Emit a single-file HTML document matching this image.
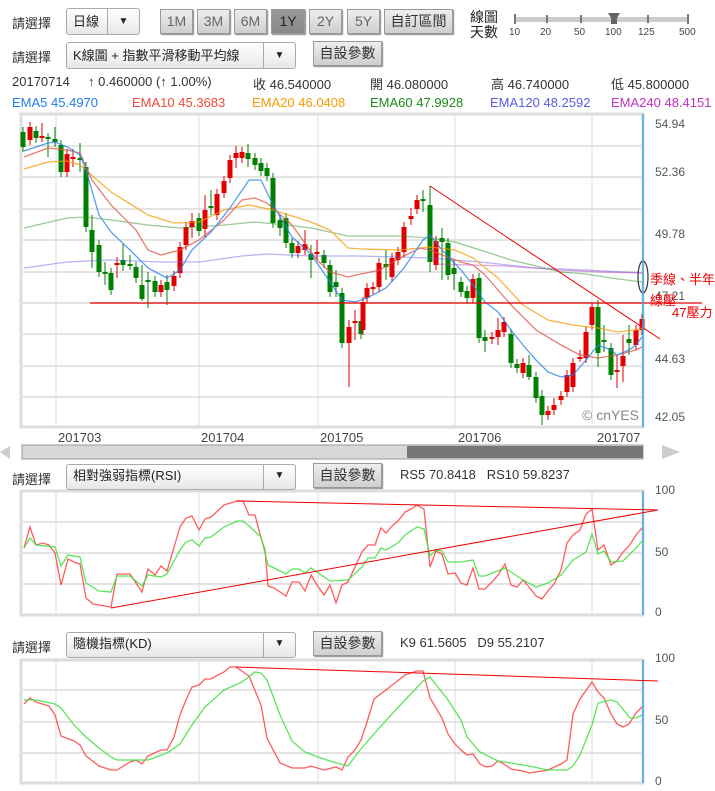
<!DOCTYPE html>
<html><head><meta charset="utf-8">
<style>
body{margin:0;width:715px;height:791px;background:#fff;position:relative;overflow:hidden;font-family:"Liberation Sans","Noto Sans CJK TC",sans-serif;font-size:13px;color:#333}
.a{position:absolute;white-space:nowrap}
.sel{position:absolute;height:24px;border:1px solid #aaa;border-radius:3px;background:linear-gradient(#fff,#e8e8e8);box-sizing:border-box;font-size:13px;line-height:22px;padding-left:6px;color:#222}
.sel .ar{position:absolute;right:0;top:0;width:31px;height:22px;border-left:1px solid #aaa;text-align:center;font-size:10px;line-height:22px}
.btn{position:absolute;height:25px;border:1px solid #999;box-sizing:border-box;background:linear-gradient(#eee,#cfcfcf);font-size:14px;line-height:23px;text-align:center;color:#666;box-shadow:1px 1px 1px #888}
.btn.dk{background:linear-gradient(#999,#888);color:#222}
.btn.cn{color:#333}
</style></head><body>
<div class="a" style="left:12px;top:13px">請選擇</div>
<div class="sel" style="left:66px;top:8px;width:74px;height:27px;line-height:25px">日線<div class="ar" style="height:25px;line-height:25px">▼</div></div>
<div class="btn" style="left:160px;top:9px;width:33px">1M</div>
<div class="btn" style="left:197px;top:9px;width:33px">3M</div>
<div class="btn" style="left:234px;top:9px;width:33px">6M</div>
<div class="btn dk" style="left:271px;top:9px;width:34px">1Y</div>
<div class="btn" style="left:309px;top:9px;width:33px">2Y</div>
<div class="btn" style="left:347px;top:9px;width:33px">5Y</div>
<div class="btn cn" style="left:384px;top:9px;width:69px">自訂區間</div>
<div class="a" style="left:470px;top:10px;line-height:15px;font-size:14px;color:#222">線圖<br>天數</div>
<div class="a" style="left:514px;top:17px;width:175px;height:5px;background:#ccc"></div>
<div class="a" style="left:514px;top:14px;width:2px;height:10px;background:#777"></div>
<div class="a" style="left:546px;top:15px;width:2px;height:8px;background:#777"></div>
<div class="a" style="left:580px;top:15px;width:2px;height:8px;background:#777"></div>
<div class="a" style="left:647px;top:15px;width:2px;height:8px;background:#777"></div>
<div class="a" style="left:687px;top:14px;width:2px;height:10px;background:#777"></div>
<svg class="a" style="left:607px;top:12px" width="14" height="13"><path d="M1 1H13L10 6V12H4V6Z" fill="#666"/></svg>
<div class="a" style="left:509px;top:27px;font-size:10px;color:#444">10</div>
<div class="a" style="left:540px;top:27px;font-size:10px;color:#444">20</div>
<div class="a" style="left:574px;top:27px;font-size:10px;color:#444">50</div>
<div class="a" style="left:605px;top:27px;font-size:10px;color:#444">100</div>
<div class="a" style="left:638px;top:27px;font-size:10px;color:#444">125</div>
<div class="a" style="left:679px;top:27px;font-size:10px;color:#444">500</div>

<div class="a" style="left:12px;top:47px">請選擇</div>
<div class="sel" style="left:66px;top:42px;width:230px;height:27px;line-height:25px">K線圖 + 指數平滑移動平均線<div class="ar" style="height:25px;line-height:25px">▼</div></div>
<div class="btn cn" style="left:313px;top:41px;width:69px">自設參數</div>

<div class="a" style="left:12px;top:74px">20170714</div>
<div class="a" style="left:88px;top:74px">↑ 0.460000 (↑ 1.00%)</div>
<div class="a" style="left:253px;top:74px">收 46.540000</div>
<div class="a" style="left:370px;top:74px">開 46.080000</div>
<div class="a" style="left:491px;top:74px">高 46.740000</div>
<div class="a" style="left:611px;top:74px">低 45.800000</div>
<div class="a" style="left:12px;top:95px;color:#1e7cf0">EMA5 45.4970</div>
<div class="a" style="left:132px;top:95px;color:#ef4a3a">EMA10 45.3683</div>
<div class="a" style="left:252px;top:95px;color:#f89a00">EMA20 46.0408</div>
<div class="a" style="left:370px;top:95px;color:#1a8a1a">EMA60 47.9928</div>
<div class="a" style="left:490px;top:95px;color:#5a5ae6">EMA120 48.2592</div>
<div class="a" style="left:611px;top:95px;color:#c030c0">EMA240 48.4151</div>

<svg class="a" style="left:0;top:0" width="715" height="791" id="s">
<g fill="none" stroke="#e4e4e4" stroke-width="2">
<rect x="21" y="114" width="622" height="313" stroke="#ddd" stroke-width="3"/>
<path d="M21 146H643M21 177H643M21 209H643M21 240H643M21 272H643M21 303H643M21 334H643M21 366H643M21 397H643"/>
<path d="M56 114V427M199 114V427M318 114V427M455 114V427M592 114V427" stroke-width="1" stroke="#ddd"/>
<rect x="21" y="491" width="622" height="124" stroke="#ddd" stroke-width="3"/>
<path d="M21 522H643M21 553H643M21 584H643"/>
<path d="M56 491V615M199 491V615M318 491V615M455 491V615M592 491V615" stroke-width="1" stroke="#ddd"/>
<rect x="21" y="660" width="622" height="123" stroke="#ddd" stroke-width="3"/>
<path d="M21 690H643M21 722H643M21 753H643"/>
<path d="M56 660V783M199 660V783M318 660V783M455 660V783M592 660V783" stroke-width="1" stroke="#ddd"/>
</g>
<g id="cd"></g>
<g fill="none" stroke-width="1.3" opacity="0.75">
<polyline stroke="#5a5ae6" opacity=".6" points="24,268 67,262 111,260 161,262 199,262 242,256 267,254 311,256 361,256 430,258 480,262 536,268 586,270 642,273"/>
<polyline stroke="#c030c0" opacity=".6" points="436,264 505,266 560,270 600,272 642,273"/>
<polyline stroke="#1a8a1a" opacity=".6" points="24,228 67,218 86,217 111,220 148,225 180,228 224,225 255,222 286,225 311,228 348,236 361,236 400,236 430,238 455,242 480,250 511,260 536,266 561,272 586,274 611,278 642,282"/>
<polyline stroke="#f89a00" points="24,169 48,162 67,161 80,165 111,192 148,215 174,223 199,222 224,210 249,205 273,210 311,222 330,230 348,248 361,249 400,250 430,247 455,250 473,258 498,278 523,305 548,320 573,325 598,328 617,332 636,330 642,328"/>
<polyline stroke="#e05040" points="24,157 48,148 67,150 80,153 92,180 111,205 136,230 148,250 161,255 180,250 199,240 224,220 242,200 255,198 267,203 292,225 317,260 330,272 348,277 361,274 380,270 400,258 420,248 430,250 442,255 461,262 473,265 485,275 511,305 536,330 561,345 580,355 598,358 617,355 636,350 642,347"/>
<polyline stroke="#1e7cf0" points="24,151 48,143 55,142 67,147 80,155 86,170 99,215 111,232 130,250 148,268 167,278 180,270 192,250 211,232 230,208 249,180 261,180 273,205 292,237 311,254 330,282 342,300 355,302 367,298 386,288 404,268 423,240 430,235 442,250 461,270 473,285 485,302 498,312 511,330 523,345 536,360 548,372 561,377 573,375 586,360 598,345 611,350 617,355 629,350 636,345 642,337"/>
</g>
<path d="M90 303H702" stroke="#e00" stroke-width="1.2"/>
<path d="M430 186L660 339" stroke="#e00" stroke-width="1"/>
<ellipse cx="643" cy="277" rx="5" ry="16" fill="none" stroke="#333" stroke-width="1.2"/>
<path d="M643 114V427M643 491V615M643 660V783" stroke="#3aa8f0" stroke-width="1.5"/>
<g font-family="Liberation Sans,sans-serif" font-size="12" fill="#555">
<text x="655" y="128">54.94</text><text x="655" y="176">52.36</text><text x="655" y="238">49.78</text><text x="655" y="300">47.21</text><text x="655" y="363">44.63</text><text x="655" y="421">42.05</text>
<text x="582" y="420" font-size="14" fill="#888">© cnYES</text>
<text x="655" y="494">100</text><text x="655" y="556">50</text><text x="655" y="616">0</text>
<text x="655" y="662">100</text><text x="655" y="724">50</text><text x="655" y="785">0</text>
<g font-size="13" fill="#444"><text x="58" y="442">201703</text><text x="201" y="442">201704</text><text x="320" y="442">201705</text><text x="458" y="442">201706</text><text x="597" y="442">201707</text></g>
</g>
<g font-family="Liberation Sans,Noto Sans CJK TC,sans-serif" font-size="13" fill="#e00">
<text x="650" y="284">季線、半年</text><text x="650" y="305">線壓</text><text x="672" y="317">47壓力</text></g>
<rect x="22" y="445" width="621" height="14" fill="#d8d8d8" stroke="#999"/>
<rect x="407" y="446" width="236" height="12" fill="#777"/>
<path d="M0 452L10 446V459Z" fill="#ccc"/><path d="M680 452L662 445V459Z" fill="#ccc"/>
<g fill="none" stroke-width="1.3">
<polyline stroke="#ff4040" opacity=".85" points="24,548 30,527 36,545 43,543 49,545 55,553 61,585 68,559 74,562 80,564 86,598 93,604 99,605 111,607 117,574 130,574 142,592 148,569 155,575 161,566 167,571 180,527 186,518 192,516 199,530 205,519 211,517 224,505 237,501 243,501 249,515 255,515 261,538 265,550 268,586 274,588 286,596 292,582 299,582 305,591 311,575 317,585 324,595 330,585 336,603 342,585 348,582 362,552 368,545 375,545 381,528 386,533 392,526 398,521 405,512 411,509 417,505 424,509 430,567 436,551 442,554 448,574 455,573 461,583 467,585 473,568 479,589 485,589 492,582 498,575 505,564 511,585 517,587 523,580 529,587 536,596 542,599 548,591 554,584 561,570 567,543 573,535 580,530 586,514 592,509 598,550 604,545 611,565 617,561 623,552 629,546 636,535 642,528"/>
<polyline stroke="#40e040" opacity=".85" points="24,548 30,538 36,545 55,547 61,566 68,555 80,557 86,583 99,591 111,592 117,576 130,576 142,586 148,575 161,577 167,574 180,550 186,542 192,540 199,546 205,538 211,537 224,527 237,521 243,521 249,526 261,537 268,565 274,568 286,574 292,569 299,569 305,573 311,568 330,581 348,580 362,567 368,558 375,558 381,548 386,550 398,543 405,535 417,527 424,529 430,556 436,550 442,551 448,562 461,562 473,560 479,576 485,576 505,568 523,580 536,587 548,583 561,575 573,560 586,552 592,534 598,554 604,551 611,562 623,561 636,548 642,541"/>
<path d="M236 501L658 510M111 608L658 510" stroke="#e00" stroke-width="1"/>
<polyline stroke="#ff4040" opacity=".85" points="24,704 30,698 36,702 49,706 55,715 61,736 74,741 80,745 86,756 99,766 111,770 117,770 130,762 136,760 142,764 148,756 161,750 167,750 174,737 180,715 186,700 192,687 199,685 205,679 211,679 218,675 224,672 230,667 236,667 249,676 261,705 267,738 280,763 292,768 305,768 311,766 324,770 336,767 342,770 348,757 355,750 361,740 367,722 374,699 386,690 405,675 417,671 423,671 430,698 436,708 442,718 448,734 455,744 461,750 467,755 473,754 480,764 486,767 492,766 498,761 504,764 511,769 523,771 529,773 542,771 548,770 561,764 567,760 573,714 580,699 592,682 598,692 604,698 611,714 617,724 623,727 629,724 636,713 642,707"/>
<polyline stroke="#40e040" opacity=".85" points="24,700 36,700 55,704 61,708 74,725 86,737 99,748 111,757 117,760 130,760 148,760 167,753 180,744 192,725 205,707 224,690 242,682 255,672 261,673 267,680 280,715 292,741 305,752 318,757 330,761 348,766 360,750 380,727 405,700 423,681 430,677 448,700 461,720 467,737 480,752 498,761 511,763 529,766 548,770 567,770 573,766 580,755 592,725 598,703 611,700 617,702 630,718 636,718 642,715"/>
<path d="M236 667L658 681" stroke="#e00" stroke-width="1"/>
</g>
</svg>

<div class="a" style="left:12px;top:469px">請選擇</div>
<div class="sel" style="left:66px;top:464px;width:230px;height:26px">相對強弱指標(RSI)<div class="ar" style="height:24px">▼</div></div>
<div class="btn cn" style="left:313px;top:463px;width:69px">自設參數</div>
<div class="a" style="left:400px;top:467px">RS5 70.8418 &nbsp; RS10 59.8237</div>

<div class="a" style="left:12px;top:637px">請選擇</div>
<div class="sel" style="left:66px;top:632px;width:230px;height:26px">隨機指標(KD)<div class="ar" style="height:24px">▼</div></div>
<div class="btn cn" style="left:313px;top:631px;width:69px">自設參數</div>
<div class="a" style="left:400px;top:635px">K9 61.5605 &nbsp; D9 55.2107</div>

<script>
var d=[[23,132,147,0],[30,127,140,1],[36,131,138,0],[42,136,138,1,123,142],[48,137,138,0,133,157],[55,139,142,0,127,147],[61,145,172,0],[67,154,172,1],[73,157,159,1,149,167],[80,158,160,0,143,172],[86,167,227,0],[92,230,252,0,215,268],[99,245,272,0],[105,272,274,0,262,285],[111,273,290,0],[117,263,265,1,257,278],[123,260,265,0,244,271],[130,264,266,0,255,270],[136,267,278,0],[142,285,299,0,265,301],[148,280,282,0,272,308],[155,281,292,0],[161,285,292,1],[167,282,290,0,275,305],[174,276,286,1],[180,247,273,1],[186,227,245,1],[192,221,227,1,213,238],[199,218,231,0],[205,210,229,1,195,237],[211,206,208,0,190,215],[217,194,215,1],[224,181,193,1],[230,160,178,1],[236,153,158,1,146,168],[242,152,158,1],[248,153,159,0,144,167],[255,158,165,0],[261,163,171,0],[267,168,176,0],[273,178,223,0],[280,220,228,0,215,236],[286,218,243,0],[292,243,253,0],[298,246,253,1],[305,244,250,1,230,255],[311,254,260,0,245,278],[317,252,254,1,240,260],[324,255,263,0],[330,265,292,0],[336,282,287,0,270,297],[342,293,343,0],[349,327,343,1,320,387],[355,321,323,1,310,340],[361,321,334,0],[363,302,330,1],[367,288,298,1],[373,287,289,1],[379,263,287,1],[386,264,267,0,250,280],[392,258,277,1],[398,252,260,1],[404,227,252,1],[411,216,219,1,208,225],[417,200,209,1],[423,199,201,0,190,212],[430,205,262,0,186,272],[436,241,265,1],[442,238,242,0,228,280],[448,243,275,0],[454,268,274,0,260,290],[461,282,292,0],[467,291,298,0],[473,279,298,1],[479,278,338,0],[485,337,341,0,330,352],[492,337,339,1],[498,330,337,1,318,345],[504,322,332,1],[511,334,363,0],[517,364,368,0],[523,363,373,1],[529,365,377,0,355,380],[536,377,398,0],[542,396,415,0,390,425],[548,411,415,1],[554,405,410,1,398,415],[561,396,400,1],[567,375,392,1],[573,363,387,1],[580,357,359,1,350,362],[586,332,358,1],[592,307,325,1],[598,307,353,0,300,367],[604,340,342,0,325,352],[611,348,375,0],[617,370,372,1,355,388],[623,356,366,1,335,382],[629,339,343,0,325,355],[636,330,345,1],[642,319,330,1]];
var h='';d.forEach(function(c){var col=c[3]?'#e00000':'#008000';var wt=c[4]||c[1]-5,wb=c[5]||c[2]+5;h+='<line x1="'+c[0]+'" x2="'+c[0]+'" y1="'+wt+'" y2="'+wb+'" stroke="'+col+'" stroke-width="1"/>';var hh=Math.max(2,c[2]-c[1]);h+='<rect x="'+(c[0]-2.5)+'" y="'+c[1]+'" width="5" height="'+hh+'" fill="'+col+'"/>';});
document.getElementById('cd').innerHTML=h;
</script>
</body></html>
